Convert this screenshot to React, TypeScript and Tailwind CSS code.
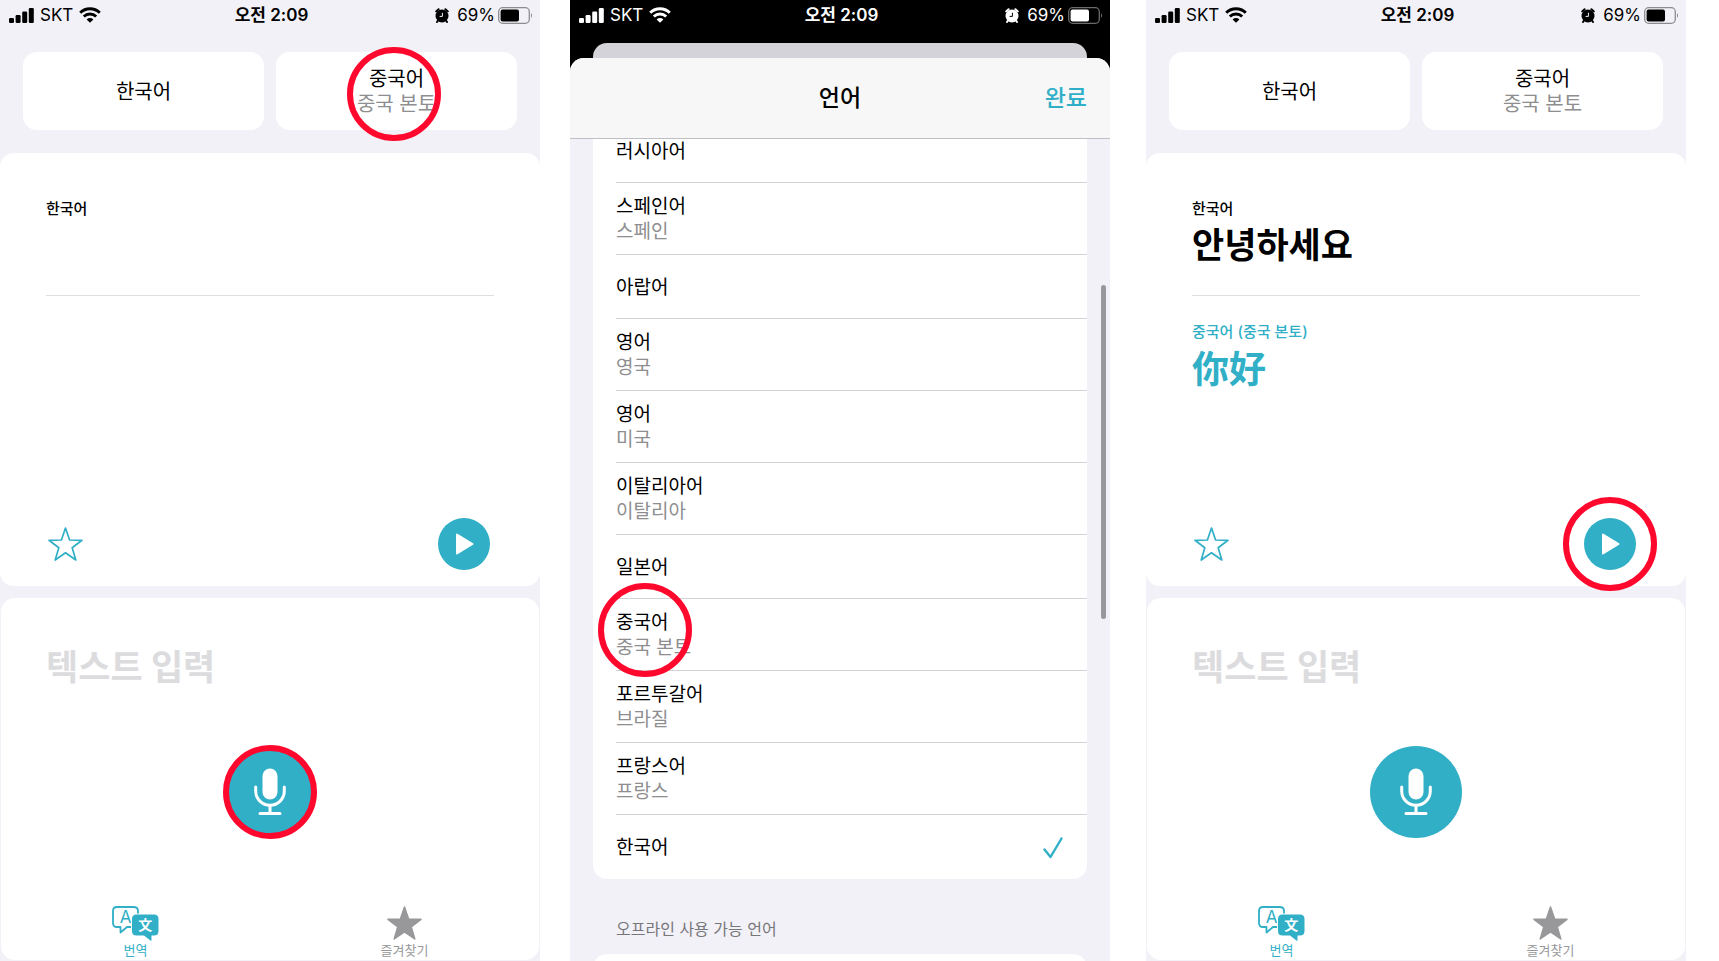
import React from 'react';
import clsx from 'clsx';

type Language = {
    name: string;
    region?: string;
    selected?: boolean;
    marked?: boolean;
};

const LANGUAGES: Language[] = [
    { name: '러시아어' },
    { name: '스페인어', region: '스페인' },
    { name: '아랍어' },
    { name: '영어', region: '영국' },
    { name: '영어', region: '미국' },
    { name: '이탈리아어', region: '이탈리아' },
    { name: '일본어' },
    { name: '중국어', region: '중국 본토', marked: true },
    { name: '포르투갈어', region: '브라질' },
    { name: '프랑스어', region: '프랑스' },
    { name: '한국어', selected: true },
];

const STAR = 'M17.5 1 L21.6 13 L34 13.3 L24.2 20.8 L27.8 33 L17.5 25.8 L7.2 33 L10.8 20.8 L1 13.3 L13.4 13 Z';

function Marker({ className }: { className: string }) {
    return (
        <span
            aria-hidden="true"
            className={clsx('pointer-events-none absolute z-20 size-[94px] rounded-full border-6 border-[#ff082e]', className)}
        />
    );
}

function StatusBar({ dark = false }: { dark?: boolean }) {
    return (
        <div
            className={clsx(
                'grid h-[30px] shrink-0 grid-cols-[1fr_auto_1fr] items-center pr-1.5 pl-[9px] text-[17px] leading-5',
                dark ? 'text-white' : 'text-black'
            )}
        >
            <div className="flex items-center gap-[6px]">
                <svg width="25" height="15" viewBox="0 0 25 15" fill="currentColor">
                    <rect x="0" y="10" width="5" height="5" rx="1.2" />
                    <rect x="6.6" y="7" width="5" height="8" rx="1.2" />
                    <rect x="13.2" y="3.5" width="5" height="11.5" rx="1.2" />
                    <rect x="19.8" y="0" width="5" height="15" rx="1.2" />
                </svg>
                <span>SKT</span>
                <svg width="22" height="16" viewBox="0 0 22 16" fill="none" stroke="currentColor" strokeWidth="2.9">
                    <path d="M1.2 5.8 A14 14 0 0 1 20.8 5.8" />
                    <path d="M4.8 9.5 A9 9 0 0 1 17.2 9.5" />
                    <path d="M11 15.8 L7.6 12.4 A4.9 4.9 0 0 1 14.4 12.4 Z" fill="currentColor" stroke="none" />
                </svg>
            </div>
            <span className="font-semibold">오전 2:09</span>
            <div className="flex items-center justify-end">
                <svg width="14" height="15" viewBox="0 0 14 15" className="mr-2">
                    <circle cx="7" cy="8" r="6.5" fill="currentColor" />
                    <path d="M1.2 3.4 L3.6 1.2 M12.8 3.4 L10.4 1.2 M3 12.5 L2 14 M11 12.5 L12 14" stroke="currentColor" strokeWidth="2" strokeLinecap="round" />
                    <path d="M7.4 4.8 V8.4 H4.6" fill="none" stroke={dark ? '#000' : '#f2f1f7'} strokeWidth="1" />
                </svg>
                <span className="mr-[3px]">69%</span>
                <svg width="36" height="17" viewBox="0 0 36 17">
                    <rect x="0.7" y="0.7" width="30.6" height="15.6" rx="4" fill="none" stroke="currentColor" strokeOpacity="0.42" strokeWidth="1.3" />
                    <rect x="2.6" y="2.6" width="18.4" height="11.8" rx="2" fill="currentColor" />
                    <path d="M33 6 Q35 8.5 33 11 Z" fill="currentColor" fillOpacity="0.45" />
                </svg>
            </div>
        </div>
    );
}

function TranslateIcon() {
    return (
        <svg width="48" height="35" viewBox="1 0 48 35">
            <path
                d="M6 1 H22.5 Q27 1 27 5 V17 Q27 21 22.5 21 H16 L9.5 26.5 V21 H6 Q2 21 2 17 V5 Q2 1 6 1 Z"
                fill="none"
                stroke="#30afc7"
                strokeWidth="1.8"
                strokeLinejoin="round"
            />
            <text x="14.5" y="17" textAnchor="middle" fontSize="17" fontWeight="400" fill="#30afc7" className="font-['Inter']">A</text>
            <rect x="20" y="7.5" width="28" height="22" rx="4.5" fill="#fff" />
            <path d="M25.5 8.5 H43 Q47.5 8.5 47.5 13 V25 Q47.5 29.5 43 29.5 H40.5 V34 Q40.5 35.2 39.4 34.4 L33 29.5 H25.5 Q21 29.5 21 25 V13 Q21 8.5 25.5 8.5 Z" fill="#30afc7" />
            <text x="34.3" y="24" textAnchor="middle" fontSize="14" fontWeight="700" fill="#fff">文</text>
        </svg>
    );
}

function MicIcon() {
    return (
        <svg width="32" height="48" viewBox="0 0 32 48" fill="none" stroke="#fff" strokeWidth="3" strokeLinecap="round">
            <rect x="8.5" y="0.5" width="15" height="31" rx="7.5" fill="#fff" stroke="none" />
            <path d="M1.7 19 V23 A14.3 14.3 0 0 0 30.3 23 V19" />
            <path d="M16 38 V45 M6 45.5 H26" />
        </svg>
    );
}

function LanguageButton({ name, region, marked }: Language) {
    return (
        <button type="button" className="relative flex h-[78px] flex-col items-center justify-center rounded-[14px] bg-white pt-0.5 text-[20px] leading-[25px]">
            <span className="text-black">{name}</span>
            {region && <span className="text-[#8e8e90]">{region}</span>}
            {marked && <Marker className="top-[-5px] left-[71px]" />}
        </button>
    );
}

type TranslateProps = {
    translated?: boolean;
    markTarget?: boolean;
    markMic?: boolean;
    markPlay?: boolean;
};

function TranslateScreen({ translated, markTarget, markMic, markPlay }: TranslateProps) {
    return (
        <section className="flex min-w-0 flex-1 flex-col bg-[#f2f1f7]">
            <StatusBar />
            <div className="mt-[22px] grid grid-cols-2 gap-3 px-[23px]">
                <LanguageButton name="한국어" />
                <LanguageButton name="중국어" region="중국 본토" marked={markTarget} />
            </div>

            <div className="mt-[23px] flex min-h-[433px] flex-col rounded-[14px] bg-white px-[46px] pt-[45px] pb-4">
                <div className="h-[98px] border-b border-[#dededf]">
                    <p className="text-[15px] leading-[22px] font-medium">한국어</p>
                    {translated && <p className="mt-1 text-[35px] leading-[42px] font-bold">안녕하세요</p>}
                </div>
                {translated && (
                    <div className="pt-[25px] text-[#30afc7]">
                        <p className="text-[15px] leading-[22px] font-medium">중국어 (중국 본토)</p>
                        <p lang="zh-CN" className="font-['Noto_Sans_CJK_SC',sans-serif] text-[37px] leading-[48px] font-bold">你好</p>
                    </div>
                )}
                <div className="mt-auto flex items-center justify-between pr-1 pl-0.5">
                    <button type="button" aria-label="즐겨찾기에 추가">
                        <svg width="35" height="34" viewBox="0 0 35 34" fill="none" stroke="#30afc7" strokeWidth="1.7" strokeLinejoin="round">
                            <path d={STAR} />
                        </svg>
                    </button>
                    <button type="button" aria-label="재생" className="relative flex size-[52px] items-center justify-center rounded-full bg-[#30afc7]">
                        <svg width="20" height="22" viewBox="0 0 20 22" fill="#fff" stroke="#fff" strokeWidth="2" strokeLinejoin="round">
                            <path d="M3 1.5 L18.5 11 L3 20.5 Z" />
                        </svg>
                        {markPlay && <Marker className="top-[-21px] left-[-21px]" />}
                    </button>
                </div>
            </div>

            <div className="mx-px mt-3 mb-px flex flex-1 flex-col items-center rounded-[14px] bg-white pt-[47px] pb-px">
                <input
                    type="text"
                    aria-label="텍스트 입력"
                    placeholder="텍스트 입력"
                    className="h-11 w-full px-[45px] text-[35px] font-bold outline-none placeholder:text-[#dcdcde] placeholder:opacity-100"
                />
                <button type="button" aria-label="음성 입력" className="relative mt-[57px] flex size-[92px] items-center justify-center rounded-full bg-[#30afc7]">
                    <MicIcon />
                    {markMic && <Marker className="top-[-1px] left-[-1px]" />}
                </button>
                <nav className="mt-auto grid w-full grid-cols-2 text-[13px] leading-[18px]">
                    <a href="#translate" className="flex flex-col items-center text-[#30afc7]">
                        <TranslateIcon />
                        번역
                    </a>
                    <a href="#favorites" className="flex flex-col items-center text-[#98989a]">
                        <svg width="35" height="35" viewBox="0 0 35 35" fill="#98989a" stroke="#98989a" strokeWidth="1.5" strokeLinejoin="round">
                            <path d={STAR} />
                        </svg>
                        즐겨찾기
                    </a>
                </nav>
            </div>
        </section>
    );
}

function LanguageRow({ name, region, selected, marked }: Language) {
    return (
        <li className="relative pl-[23px]">
            <button
                type="button"
                className={clsx(
                    'flex w-full items-center justify-between pt-px pr-6 text-left text-[19px] leading-[25px]',
                    region ? 'h-[72px]' : 'h-16',
                    !selected && 'border-b border-[#d3d3d5]'
                )}
            >
                <span className="flex flex-col">
                    <span className="text-black">{name}</span>
                    {region && <span className="text-[#8e8e90]">{region}</span>}
                </span>
                {selected && (
                    <svg width="20" height="22" viewBox="0 0 20 22" fill="none" stroke="#30afc7" strokeWidth="2.4" strokeLinecap="round" strokeLinejoin="round">
                        <path d="M1.5 12.5 L7.5 20 L18.5 1.5" />
                    </svg>
                )}
            </button>
            {marked && <Marker className="top-[-16px] left-[5px]" />}
        </li>
    );
}

function LanguageSheet() {
    return (
        <section className="flex min-w-0 flex-1 flex-col bg-black">
            <StatusBar dark />
            <div className="mx-[23px] mt-[13px] h-[15px] shrink-0 rounded-t-[14px] bg-[#d4d3d9]" />
            <div className="relative flex min-h-0 flex-1 flex-col overflow-hidden rounded-t-[14px] bg-[#f2f1f7]">
                <header className="relative z-10 grid h-[81px] shrink-0 grid-cols-[1fr_auto_1fr] items-center border-b border-[#bfbec4] bg-[#f7f7f8] px-[23px] text-[23px]">
                    <h1 className="col-start-2 font-medium">언어</h1>
                    <button type="button" className="justify-self-end font-medium text-[#30afc7]">완료</button>
                </header>
                {/* first row is scrolled partly under the header */}
                <ul className="mx-[23px] -mt-5 shrink-0 rounded-b-[14px] bg-white">
                    {LANGUAGES.map((lang) => (
                        <LanguageRow key={lang.name + (lang.region ?? '')} {...lang} />
                    ))}
                </ul>
                <h2 className="mt-[38px] ml-[46px] text-[16px] leading-6 text-[#77777b]">오프라인 사용 가능 언어</h2>
                <div className="mx-[23px] mt-[13px] h-16 shrink-0 rounded-t-[14px] bg-white" />
                <div className="absolute top-[227px] right-1 h-[334px] w-[5px] rounded-full bg-[#98979d]" />
            </div>
        </section>
    );
}

export default function App() {
    return (
        <main className="flex h-screen overflow-hidden bg-white pr-[33px] font-['Inter','Noto_Sans_CJK_KR',sans-serif] text-black">
            <TranslateScreen markTarget markMic />
            <div className="ml-[30px] flex min-w-0 flex-1">
                <LanguageSheet />
            </div>
            <div className="ml-9 flex min-w-0 flex-1">
                <TranslateScreen translated markPlay />
            </div>
        </main>
    );
}
